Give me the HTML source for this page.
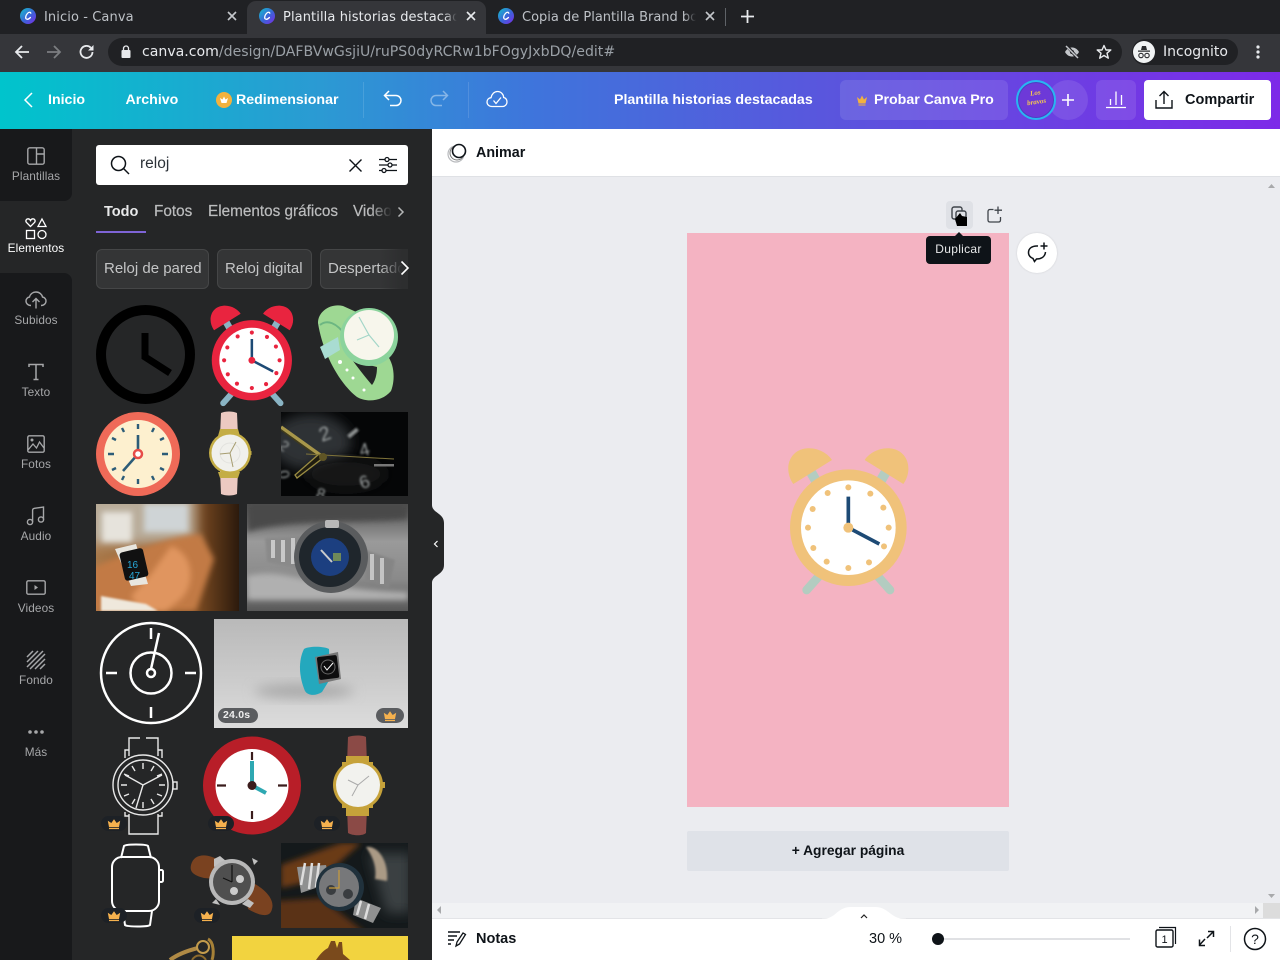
<!DOCTYPE html>
<html lang="es"><head><meta charset="utf-8"><title>Canva</title>
<style>
*{box-sizing:border-box}
html,body{margin:0;padding:0;width:1280px;height:960px;overflow:hidden;background:#ebecf0;font-family:"Liberation Sans",sans-serif}
.a{position:absolute}
.t{position:absolute;white-space:nowrap;line-height:16px}
.c{font-family:"DejaVu Sans",sans-serif;font-size:13px;letter-spacing:.1px}
.h{color:#fff;font-weight:700;font-size:14.200px;top:91.500px}
.s{left:0;width:72px;text-align:center;font-size:11.800px;color:#a6a7a9;letter-spacing:.1px}
.m{font-size:15.300px;color:#bcbdbe;-webkit-text-stroke:.2px #bcbdbe}
.k{font-size:15px;color:#c4c5c6}
svg{position:absolute;overflow:visible;display:block}
svg.p{overflow:hidden}
.crown{position:absolute;border-radius:10px;background:#1d2126;width:26px;height:15px}
</style></head><body>
<svg width="0" height="0" style="position:absolute"><defs>
<symbol id="alarm" viewBox="0 0 480 540">
<path d="M122 125L148 170M348 125L322 170" stroke="var(--l)" stroke-width="30"/>
<path d="M150 435L110 480M320 435L360 480" stroke="var(--l)" stroke-width="26" stroke-linecap="round"/>
<path d="M70 162C40 120 55 60 110 55C145 52 175 72 186 90ZM400 162C430 120 415 60 360 55C325 52 295 72 284 90Z" fill="var(--b)"/>
<circle cx="235" cy="293" r="175" fill="var(--b)"/><circle cx="235" cy="293" r="142" fill="#fff"/>
<g fill="var(--b)"><circle cx="235" cy="172" r="9"/><circle cx="301" cy="191" r="9"/><circle cx="340" cy="233" r="9"/><circle cx="356" cy="293" r="9"/><circle cx="342" cy="349" r="9"/><circle cx="297" cy="397" r="9"/><circle cx="235" cy="414" r="9"/><circle cx="170" cy="395" r="9"/><circle cx="130" cy="354" r="9"/><circle cx="114" cy="293" r="9"/><circle cx="128" cy="237" r="9"/><circle cx="173" cy="189" r="9"/></g>
<path d="M235 200V293L328 342" fill="none" stroke="#1d4a75" stroke-width="11"/>
<circle cx="235" cy="293" r="15" fill="var(--b)"/>
</symbol>
<filter id="b1" x="-30%" y="-30%" width="160%" height="160%"><feGaussianBlur stdDeviation="1"/></filter>
<filter id="b3" x="-30%" y="-30%" width="160%" height="160%"><feGaussianBlur stdDeviation="3"/></filter>
<filter id="b6" x="-50%" y="-50%" width="200%" height="200%"><feGaussianBlur stdDeviation="6"/></filter>
<symbol id="cr" viewBox="0 0 26 15"><path d="M8 11L6.800 4.800L10.300 7L13 3.200L15.700 7L19.200 4.800L18 11Z" fill="#f5b14e"/><rect x="8" y="11.800" width="10" height="1.300" fill="#f5b14e"/></symbol>
<symbol id="logo" viewBox="0 0 16 16"><defs><linearGradient id="lg" x1="0" y1="0" x2="1" y2="1"><stop offset="0" stop-color="#12c2cc"/><stop offset=".55" stop-color="#3d62d8"/><stop offset="1" stop-color="#7d2ae8"/></linearGradient></defs><circle cx="8" cy="8" r="8" fill="url(#lg)"/><path d="M10.800 5.200C10.500 3.800 8.800 3.900 7.400 5.500C5.700 7.500 5.100 10.200 6.400 11C7.500 11.700 9.200 10.800 10.400 9.500" fill="none" stroke="#fff" stroke-width="1.300" stroke-linecap="round"/></symbol>
</defs></svg>

<!-- Chrome -->
<div class="a" style="left:0;top:0;width:1280px;height:34px;background:#202124"></div>
<div class="a" style="left:0;top:34px;width:1280px;height:38px;background:#35363a"></div>
<div class="a" style="left:247px;top:1px;width:239px;height:33px;background:#35363a;border-radius:9px 9px 0 0"></div>
<svg style="left:20px;top:8px" width="16" height="16"><use href="#logo"/></svg>
<svg style="left:259px;top:8px" width="16" height="16"><use href="#logo"/></svg>
<svg style="left:498px;top:8px" width="16" height="16"><use href="#logo"/></svg>
<div class="t c" style="left:44px;top:10px;color:#bdc1c6">Inicio - Canva</div>
<div class="t c" style="left:283px;top:10px;width:177px;overflow:hidden;color:#e8eaed">Plantilla historias destacadas</div>
<div class="a" style="left:444px;top:6px;width:16px;height:20px;background:linear-gradient(90deg,rgba(53,54,58,0),#35363a 80%)"></div>
<div class="t c" style="left:522px;top:10px;width:176px;overflow:hidden;color:#bdc1c6;letter-spacing:0">Copia de Plantilla Brand book</div>
<div class="a" style="left:684px;top:6px;width:14px;height:20px;background:linear-gradient(90deg,rgba(32,33,36,0),#202124 85%)"></div>
<svg style="left:227px;top:11px" width="10" height="10"><path d="M1 1L9 9M9 1L1 9" stroke="#c4c7cb" stroke-width="1.600"/></svg>
<svg style="left:466px;top:11px" width="10" height="10"><path d="M1 1L9 9M9 1L1 9" stroke="#e8eaed" stroke-width="1.600"/></svg>
<svg style="left:705px;top:11px" width="10" height="10"><path d="M1 1L9 9M9 1L1 9" stroke="#c4c7cb" stroke-width="1.600"/></svg>
<div class="a" style="left:725px;top:8px;width:1px;height:18px;background:#5f6368"></div>
<svg style="left:741px;top:10px" width="13" height="13"><path d="M6.500 0V13M0 6.500H13" stroke="#e8eaed" stroke-width="1.800"/></svg>
<svg style="left:14px;top:44px" width="16" height="16"><path d="M15 8H2M8 2L2 8L8 14" fill="none" stroke="#e8eaed" stroke-width="1.800"/></svg>
<svg style="left:46px;top:44px" width="16" height="16"><path d="M1 8H14M8 2L14 8L8 14" fill="none" stroke="#7c7e81" stroke-width="1.800"/></svg>
<svg style="left:79px;top:44px" width="16" height="16"><path d="M13.500 8A6 6 0 1 1 11.800 3.700" fill="none" stroke="#e8eaed" stroke-width="1.800"/><path d="M14.500 1V6.500H9Z" fill="#e8eaed"/></svg>
<div class="a" style="left:108px;top:38px;width:1014px;height:28px;background:#202124;border-radius:14px"></div>
<svg style="left:121px;top:45px" width="10" height="13"><rect x="0.500" y="5" width="9" height="8" rx="1" fill="#e8eaed"/><path d="M2.500 5V3.500a2.500 2.500 0 0 1 5 0V5" fill="none" stroke="#e8eaed" stroke-width="1.300"/></svg>
<div class="t" style="left:142px;top:44px;font-family:'DejaVu Sans',sans-serif;font-size:14.100px;color:#e8eaed">canva.com<span style="color:#9aa0a6">/design/DAFBVwGsjiU/ruPS0dyRCRw1bFOgyJxbDQ/edit#</span></div>
<svg style="left:1064px;top:44px" width="16" height="16"><path d="M1 8C3 4.500 5.500 3.500 8 3.500S13 4.500 15 8C13 11.500 10.500 12.500 8 12.500S3 11.500 1 8Z" fill="#c4c7cb"/><circle cx="8" cy="8" r="2" fill="#202124"/><path d="M2.500 1.500L13.500 14" stroke="#202124" stroke-width="3"/><path d="M2 2L14 14" stroke="#c4c7cb" stroke-width="1.500"/></svg>
<svg style="left:1096px;top:44px" width="16" height="16"><path d="M8 1.500L10 6H14.800L11 9.200L12.300 14.200L8 11.500L3.700 14.200L5 9.200L1.200 6H6Z" fill="none" stroke="#e8eaed" stroke-width="1.400" stroke-linejoin="round"/></svg>
<div class="a" style="left:1132px;top:39px;width:106px;height:26px;background:#202124;border-radius:13px"></div>
<div class="a" style="left:1133px;top:41px;width:22px;height:22px;background:#f1f3f4;border-radius:50%"></div>
<svg style="left:1137px;top:45px" width="14" height="14"><path d="M4 5L5 1H9L10 5ZM1 5.500H13V6.700H1Z" fill="#2b2c2f"/><circle cx="4" cy="10.500" r="2.200" fill="none" stroke="#2b2c2f" stroke-width="1.100"/><circle cx="10" cy="10.500" r="2.200" fill="none" stroke="#2b2c2f" stroke-width="1.100"/></svg>
<div class="t" style="left:1163px;top:44px;font-family:'DejaVu Sans',sans-serif;font-size:14px;color:#e8eaed">Incognito</div>
<svg style="left:1256px;top:45px" width="4" height="14"><circle cx="2" cy="2" r="1.600" fill="#e8eaed"/><circle cx="2" cy="7" r="1.600" fill="#e8eaed"/><circle cx="2" cy="12" r="1.600" fill="#e8eaed"/></svg>

<!-- Canva header -->
<div class="a" style="left:0;top:72px;width:1280px;height:57px;background:linear-gradient(90deg,#00c4cc 0,#2b9ad3 25%,#3f74dc 42%,#5a55dd 65%,#7d2ae8 100%)"></div>
<svg style="left:23px;top:92px" width="10" height="16"><path d="M9 1L2 8L9 15" fill="none" stroke="#fff" stroke-width="1.500"/></svg>
<div class="t h" style="left:48px">Inicio</div>
<div class="t h" style="left:125.500px">Archivo</div>
<div class="a" style="left:216px;top:92px;width:16px;height:16px;border-radius:50%;background:#f3b23e"></div>
<svg style="left:219px;top:95px" width="10" height="10"><path d="M1 3L2.500 8H7.500L9 3L6.500 4.500L5 1.500L3.500 4.500Z" fill="#fff"/></svg>
<div class="t h" style="left:236px">Redimensionar</div>
<div class="a" style="left:363px;top:82px;width:1px;height:36px;background:rgba(255,255,255,.12)"></div>
<div class="a" style="left:468px;top:82px;width:1px;height:36px;background:rgba(255,255,255,.12)"></div>
<svg style="left:383px;top:90px" width="20" height="18"><path d="M6 1L1.500 5.500L6 10M2 5.500H13C16 5.500 18 8 18 10.500S16 15.500 13 15.500H7" fill="none" stroke="#fff" stroke-width="1.500"/></svg>
<svg style="left:429px;top:90px" width="20" height="18"><path d="M14 1L18.500 5.500L14 10M18 5.500H7C4 5.500 2 8 2 10.500S4 15.500 7 15.500H13" fill="none" stroke="rgba(255,255,255,.4)" stroke-width="1.500"/></svg>
<svg style="left:486px;top:90px" width="22" height="18"><path d="M6 16.500C3 16.500 1 14.500 1 12C1 9.700 2.700 8 5 7.700C5.800 4 8.300 1.500 11.500 1.500C15 1.500 17.500 4.300 17.700 7.500C19.700 8 21 9.800 21 12C21 14.500 19 16.500 16.500 16.500Z" fill="none" stroke="#fff" stroke-width="1.300"/><path d="M7.500 10.500L10 13.500L15 7.500" fill="none" stroke="#fff" stroke-width="1.300"/></svg>
<div class="t h" style="left:614px">Plantilla historias destacadas</div>
<div class="a" style="left:840px;top:80px;width:168px;height:40px;border-radius:6px;background:rgba(255,255,255,.1)"></div>
<svg style="left:856px;top:94px" width="12" height="12"><path d="M1 3L2.500 9.500H9.500L11 3L8 5.500L6 1.500L4 5.500ZM2.500 10.500H9.500V11.500H2.500Z" fill="#f3b23e"/></svg>
<div class="t h" style="left:874px">Probar Canva Pro</div>
<div class="a" style="left:1048px;top:80px;width:40px;height:40px;border-radius:50%;background:rgba(255,255,255,.1)"></div>
<div class="a" style="left:1016px;top:80px;width:40px;height:40px;border-radius:50%;border:2px solid #28b6f2;background:#6d39d8;box-shadow:inset 0 0 0 1px #4c3fc0"></div>
<div class="t" style="left:1016px;top:89px;width:40px;text-align:center;font-size:7px;line-height:9px;font-weight:700;font-style:italic;color:#f5c94f;font-family:'Liberation Serif',serif;transform:rotate(-8deg)">Los<br>bravos</div>
<svg style="left:1062px;top:94px" width="12" height="12"><path d="M6 0V12M0 6H12" stroke="#fff" stroke-width="1.600"/></svg>
<div class="a" style="left:1096px;top:80px;width:40px;height:40px;border-radius:6px;background:rgba(255,255,255,.1)"></div>
<svg style="left:1106px;top:90px" width="20" height="19"><path d="M0 17.500H20" stroke="#fff" stroke-width="1.300"/><path d="M4.500 9V15M10 1.500V15M15.500 5V15" stroke="#fff" stroke-width="1.300"/></svg>
<div class="a" style="left:1144px;top:80px;width:127px;height:40px;border-radius:4px;background:#fff"></div>
<svg style="left:1155px;top:90px" width="18" height="19"><path d="M1 10V18H17V10M9 14V1.500M4.500 6L9 1.500L13.500 6" fill="none" stroke="#0e1318" stroke-width="1.400"/></svg>
<div class="t" style="left:1185px;top:91.500px;color:#0e1318;font-weight:700;font-size:14.500px">Compartir</div>

<!-- Sidebar -->
<div class="a" style="left:0;top:129px;width:72px;height:831px;background:#18191b"></div>
<div class="a" style="left:72px;top:129px;width:360px;height:831px;background:#252627"></div>
<div class="a" style="left:0;top:191px;width:72px;height:92px;background:#252627"></div>
<div class="a" style="left:0;top:129px;width:72px;height:72px;border-radius:0 0 8px 0;background:#18191b"></div>
<div class="a" style="left:0;top:273px;width:72px;height:72px;border-radius:0 8px 0 0;background:#18191b"></div>
<svg style="left:27px;top:147px" width="18" height="18"><rect x=".8" y=".8" width="16.400" height="16.400" rx="2" fill="none" stroke="#a6a7a9" stroke-width="1.400"/><path d="M9.500 1V17M9.500 7H17" stroke="#a6a7a9" stroke-width="1.400"/></svg>
<div class="t s" style="top:168px">Plantillas</div>
<svg style="left:25px;top:218px" width="22" height="21"><path d="M5.500 8.500L1.500 4.500C0 2.500 1.500 .8 3 .8C4.200 .8 5 1.500 5.500 2.500C6 1.500 6.800 .8 8 .8C9.500 .8 11 2.500 9.500 4.500Z" fill="none" stroke="#fff" stroke-width="1.300"/><path d="M17 1L21 8.500H13Z" fill="none" stroke="#fff" stroke-width="1.300"/><rect x="1.500" y="12.500" width="8" height="8" fill="none" stroke="#fff" stroke-width="1.300"/><circle cx="17" cy="16.500" r="4" fill="none" stroke="#fff" stroke-width="1.300"/></svg>
<div class="t s" style="top:240px;color:#fff">Elementos</div>
<svg style="left:25px;top:291px" width="22" height="18"><path d="M6 14.500C3 14.500 1 12.500 1 10C1 8 2.500 6.300 4.500 6C5.200 3 7.800 1 11 1C14.500 1 17 3.500 17.500 6C19.500 6.300 21 8 21 10C21 12.500 19 14.500 16 14.500M11 17.500V8M7.500 11L11 7.500L14.500 11" fill="none" stroke="#a6a7a9" stroke-width="1.400"/></svg>
<div class="t s" style="top:312px">Subidos</div>
<svg style="left:28px;top:363px" width="16" height="18"><path d="M1 4V1.500H15V4M8 1.500V16.500M5.500 16.500H10.500" fill="none" stroke="#a6a7a9" stroke-width="1.500"/></svg>
<div class="t s" style="top:384px">Texto</div>
<svg style="left:27px;top:435px" width="18" height="18"><rect x=".8" y=".8" width="16.400" height="16.400" rx="1.500" fill="none" stroke="#a6a7a9" stroke-width="1.400"/><circle cx="5" cy="5" r="1.500" fill="#a6a7a9"/><path d="M1 15L6 9L9.500 13L12.500 7L17 13" fill="none" stroke="#a6a7a9" stroke-width="1.300"/></svg>
<div class="t s" style="top:456px">Fotos</div>
<svg style="left:26px;top:506px" width="20" height="20"><circle cx="4" cy="16" r="2.600" fill="none" stroke="#a6a7a9" stroke-width="1.400"/><circle cx="15" cy="13.500" r="2.600" fill="none" stroke="#a6a7a9" stroke-width="1.400"/><path d="M6.600 16V4C6.600 3 7.500 2.500 8.500 2.300L17.500 1V13.500" fill="none" stroke="#a6a7a9" stroke-width="1.400"/></svg>
<div class="t s" style="top:528px">Audio</div>
<svg style="left:26px;top:580px" width="20" height="15"><rect x=".8" y=".8" width="18.400" height="13.400" rx="1.500" fill="none" stroke="#a6a7a9" stroke-width="1.400"/><path d="M8.500 5L12 7.500L8.500 10Z" fill="#a6a7a9"/></svg>
<div class="t s" style="top:600px">Videos</div>
<svg style="left:26px;top:650px" width="20" height="20"><path d="M1 7L7 1M1 12L12 1M1 17L17 1M4 19L19 4M9 19L19 9M14 19L19 14" stroke="#a6a7a9" stroke-width="1.500"/></svg>
<div class="t s" style="top:672px">Fondo</div>
<svg style="left:27px;top:729px" width="18" height="6"><circle cx="3" cy="3" r="1.800" fill="#a6a7a9"/><circle cx="9" cy="3" r="1.800" fill="#a6a7a9"/><circle cx="15" cy="3" r="1.800" fill="#a6a7a9"/></svg>
<div class="t s" style="top:744px">Más</div>

<!-- Search -->
<div class="a" style="left:96px;top:145px;width:312px;height:40px;background:#fff;border-radius:3px"></div>
<svg style="left:110px;top:155px" width="20" height="20"><circle cx="8.500" cy="8.500" r="7" fill="none" stroke="#0e1318" stroke-width="1.500"/><path d="M13.500 13.500L19 19" stroke="#0e1318" stroke-width="1.500"/></svg>
<div class="t" style="left:140px;top:155.500px;font-size:15.500px;color:#2c3238">reloj</div>
<svg style="left:349px;top:159px" width="13" height="13"><path d="M.5 .5L12.500 12.500M12.500 .5L.5 12.500" stroke="#0e1318" stroke-width="1.400"/></svg>
<svg style="left:378px;top:156px" width="20" height="18"><path d="M1 3.500H7M11 3.500H19M1 9H10M14 9H19M1 14.500H4M8 14.500H19" stroke="#0e1318" stroke-width="1.300"/><circle cx="9" cy="3.500" r="2" fill="none" stroke="#0e1318" stroke-width="1.300"/><circle cx="12" cy="9" r="2" fill="none" stroke="#0e1318" stroke-width="1.300"/><circle cx="6" cy="14.500" r="2" fill="none" stroke="#0e1318" stroke-width="1.300"/></svg>

<div class="t" style="left:104px;top:204px;font-size:14.500px;font-weight:700;color:#e8e9ea">Todo</div>
<div class="t m" style="left:154px;top:204px">Fotos</div>
<div class="t m" style="left:208px;top:204px">Elementos gráficos</div>
<div class="t m" style="left:353px;top:204px;width:38px;overflow:hidden">Videos</div>
<div class="a" style="left:370px;top:200px;width:22px;height:24px;background:linear-gradient(90deg,rgba(37,38,39,0),#252627)"></div>
<svg style="left:397px;top:206px" width="8" height="12"><path d="M1.500 1.500L6 6L1.500 10.500" fill="none" stroke="#b5b6b7" stroke-width="1.500"/></svg>
<div class="a" style="left:96px;top:231px;width:50px;height:2px;background:#7e64d6"></div>

<div class="a" style="left:96px;top:249px;width:113px;height:40px;background:#343536;border:1px solid #454647;border-radius:6px"></div>
<div class="t k" style="left:104px;top:261px">Reloj de pared</div>
<div class="a" style="left:217px;top:249px;width:95px;height:40px;background:#343536;border:1px solid #454647;border-radius:6px"></div>
<div class="t k" style="left:225px;top:261px">Reloj digital</div>
<div class="a" style="left:320px;top:249px;width:88px;height:40px;background:#343536;border:1px solid #454647;border-right:0;border-radius:6px 0 0 6px;overflow:hidden"></div>
<div class="t k" style="left:328px;top:261px;width:78px;overflow:hidden">Despertador</div>
<div class="a" style="left:380px;top:249px;width:28px;height:40px;background:linear-gradient(90deg,rgba(52,53,54,0),#2d2e2f 80%)"></div>
<svg style="left:400px;top:260px" width="10" height="16"><path d="M1.500 1.500L8 8L1.500 14.500" fill="none" stroke="#fff" stroke-width="1.600"/></svg>

<!-- Row 1 -->
<svg style="left:96px;top:305px" width="100" height="100"><circle cx="49.500" cy="49.500" r="44.500" fill="none" stroke="#000" stroke-width="10"/><path d="M49 28V52L74 68" fill="none" stroke="#000" stroke-width="7"/></svg>
<svg style="left:198px;top:293px;--b:#e9243f;--l:#8ab4c4" width="110" height="124"><use href="#alarm" width="110" height="124"/></svg>
<svg style="left:317px;top:305px" width="82" height="98"><path d="M1 18C1 6 14 -2 26 1L46 10L70 50C78 60 78 76 74 86C66 96 50 98 40 92C24 80 6 50 1 18Z" fill="#9ed893"/><path d="M36 56L52 60L60 62C60 70 58 76 55 80C48 72 42 64 36 56Z" fill="#252627"/><path d="M3 20C10 14 20 18 28 30" fill="none" stroke="#6cb682" stroke-width="2"/><path d="M3 42L21 32L23 45L8 54Z" fill="#a9dcd2"/><circle cx="52" cy="32" r="29" fill="#8bd39c"/><circle cx="52" cy="30" r="25" fill="#f7f6ec"/><path d="M52 30L42 12M52 30L62 42M52 30L40 35" stroke="#a3d6c8" stroke-width="1.200"/><g fill="#fff"><circle cx="23" cy="57" r="2"/><circle cx="30" cy="65" r="1.500"/><circle cx="36" cy="73" r="1.500"/><circle cx="47" cy="85" r="1.500"/></g></svg>

<!-- Row 2 -->
<svg style="left:96px;top:412px" width="85" height="84"><circle cx="42" cy="42" r="42" fill="#ef6a58"/><circle cx="42" cy="42" r="34" fill="#fdf0cf"/><path d="M42 12V17M42 67V72M72 42H66M12 42H18M58 16L56 20M26 68L28 64M68 26L64 28M16 58L20 56M68 58L64 56M16 26L20 28M58 68L56 64M26 16L28 20" stroke="#2c5c78" stroke-width="2.400"/><path d="M42 23V40M42 42L27 59" stroke="#2c5c78" stroke-width="2.600" fill="none"/><circle cx="42" cy="42" r="4" fill="#fff" stroke="#e74c48" stroke-width="2.500"/></svg>
<svg style="left:207px;top:412px" width="44" height="84"><path d="M14 1C18 -1 26 -1 30 1L31 24H13ZM13 58H31L30 82C26 84 18 84 14 82Z" fill="#ecc9c1"/><path d="M13 17H31L33 24H11ZM11 60H33L31 66H13Z" fill="#c4ad45"/><circle cx="23" cy="41" r="21" fill="#c4ad45"/><circle cx="23" cy="41" r="18.500" fill="#f0f0ec"/><circle cx="23" cy="41" r="10" fill="none" stroke="#e2e2de"/><path d="M23 41L29 30M23 41L13 42M23 41L26 55" stroke="#a69d70" stroke-width="1"/><rect x="43" y="39" width="1.500" height="4" fill="#c4ad45"/></svg>
<svg class="p" style="left:281px;top:412px" width="127" height="84"><rect width="127" height="84" fill="#050607"/><ellipse cx="30" cy="30" rx="40" ry="28" fill="#2e3334" filter="url(#b6)"/><ellipse cx="65" cy="62" rx="40" ry="16" fill="#141718" filter="url(#b6)"/><path d="M0 15L42 45" stroke="#a8974a" stroke-width="3.500"/><path d="M0 18L40 47" stroke="#3f3a1c" stroke-width="1.500"/><path d="M42 46L16 66L14 63L38 42Z" fill="#1f1c10" stroke="#9b8d42" stroke-width="1.300"/><path d="M25 42L113 47" stroke="#80743a" stroke-width="1"/><circle cx="42" cy="45" r="4" fill="#5f5525"/><g font-family="Liberation Sans,sans-serif" fill="#9a9f9f" filter="url(#b1)"><text x="38" y="28" font-size="20" transform="rotate(-20 45 21)">2</text><text x="78" y="43" font-size="18" transform="rotate(-15 86 36)">4</text><text x="78" y="75" font-size="18" transform="rotate(-20 86 68)">6</text><text x="36" y="88" font-size="16" transform="rotate(15 42 80)">8</text><text x="0" y="70" font-size="15" transform="rotate(80 5 63)">0</text><text x="0" y="40" font-size="15" transform="rotate(40 5 33)">2</text></g><rect x="66" y="19" width="12" height="4" transform="rotate(-40 72 21)" fill="#8c9090" filter="url(#b1)"/><rect x="93" y="52" width="20" height="2.500" fill="#777"/></svg>

<!-- Row 3 -->
<svg class="p" style="left:96px;top:504px" width="143" height="107"><defs><linearGradient id="g3" x1="0" y1="0" x2="1" y2="0"><stop offset="0" stop-color="#a9794a"/><stop offset=".65" stop-color="#8a5426"/><stop offset="1" stop-color="#2c1a0c"/></linearGradient></defs><rect width="143" height="107" fill="url(#g3)"/><rect x="-10" y="-10" width="110" height="50" fill="#b9ad9b" filter="url(#b6)"/><rect x="48" y="0" width="44" height="28" fill="#cfd4d6" filter="url(#b3)"/><rect x="6" y="8" width="30" height="30" fill="#e6e3dc" filter="url(#b3)"/><path d="M-5 64C30 50 70 32 105 30L118 55L100 107H-5Z" fill="#c27a45" filter="url(#b3)"/><path d="M75 42C98 50 100 80 85 95L70 107H45L35 92L55 70Z" fill="#e0955e" filter="url(#b3)"/><path d="M5 92L50 100L62 107H5Z" fill="#efe8dc" filter="url(#b1)"/><path d="M19 45L40 40L52 80L35 82Z" fill="#e8e6df"/><rect x="0" y="0" width="24" height="29" rx="3" transform="translate(23 49) rotate(-13)" fill="#111"/><text x="31" y="64" font-size="10" fill="#27a8d8" font-family="Liberation Sans,sans-serif">16</text><text x="33" y="75" font-size="10" fill="#27a8d8" font-family="Liberation Sans,sans-serif">47</text></svg>
<svg class="p" style="left:247px;top:504px" width="161" height="107"><defs><linearGradient id="g1" x1="0" y1="0" x2="0" y2="1"><stop offset="0" stop-color="#4f4f4f"/><stop offset=".35" stop-color="#9a9a9a"/><stop offset=".7" stop-color="#8a8a8a"/><stop offset="1" stop-color="#585858"/></linearGradient></defs><rect width="161" height="107" fill="url(#g1)"/><path d="M0 28C50 14 110 20 161 15V0H0Z" fill="#4a4a4a" filter="url(#b3)"/><path d="M0 72C40 62 60 85 161 88V96H0Z" fill="#b0b0b0" filter="url(#b3)"/><path d="M18 34L56 32L56 66L20 58Z" fill="#8a8a8a" filter="url(#b1)"/><path d="M26 36V54M36 36V58M46 34V60" stroke="#c8c8c8" stroke-width="4"/><path d="M118 46L148 56L142 84L118 76Z" fill="#858585" filter="url(#b1)"/><path d="M125 50V76M135 54V80" stroke="#c4c4c4" stroke-width="4"/><ellipse cx="84" cy="53" rx="37" ry="36" fill="#5a5c5e"/><ellipse cx="83" cy="53" rx="31" ry="30" fill="#1f262c"/><circle cx="83" cy="53" r="19" fill="#1c3f80"/><rect x="86" y="49" width="8" height="8" fill="#6f8a5a"/><path d="M74 46L85 58" stroke="#ccc" stroke-width="2"/><rect x="78" y="16" width="14" height="8" rx="2" fill="#b8b8b8"/></svg>

<!-- Row 4 -->
<svg style="left:100px;top:622px" width="102" height="102"><g fill="none" stroke="#fff" stroke-width="2.500"><circle cx="51" cy="51" r="50"/><circle cx="51" cy="51" r="20.500"/><circle cx="51" cy="51" r="4"/><path d="M51 6V17M51 85V96M6 51H17M85 51H96M51 47L59 11"/></g></svg>
<svg class="p" style="left:214px;top:619px" width="194" height="109"><defs><linearGradient id="g2" x1="0" y1="0" x2="0" y2="1"><stop offset="0" stop-color="#b9b9b9"/><stop offset=".6" stop-color="#cdcdcd"/><stop offset="1" stop-color="#dcdcdc"/></linearGradient></defs><rect width="194" height="109" fill="url(#g2)"/><ellipse cx="90" cy="72" rx="50" ry="7" fill="#a8a8a8" filter="url(#b6)"/><path d="M90 30C94 27 110 27 115 30L116 60L108 73C102 77 94 77 91 72C85 58 84 42 90 30Z" fill="#24a8bd"/><path d="M101 38L124 33L127 60L105 65Z" fill="#777"/><rect x="104" y="37" width="20" height="23" rx="2" transform="rotate(-7 114 48)" fill="#0d0d0e"/><circle cx="114" cy="48" r="7" fill="none" stroke="#666"/><path d="M110 47L113 51L119 44" fill="none" stroke="#fff" stroke-width="1"/></svg>
<div class="a" style="left:218px;top:708px;width:40px;height:15px;border-radius:8px;background:#5a5c5f"></div>
<div class="t" style="left:223px;top:708px;font-size:10.500px;line-height:15px;font-weight:700;color:#eee;letter-spacing:.2px">24.0s</div>
<div class="a" style="left:376px;top:708px;width:28px;height:15px;border-radius:8px;background:#5a5c5f"></div>
<svg style="left:377px;top:708px" width="26" height="15"><use href="#cr"/></svg>

<!-- Row 5 -->
<svg style="left:110px;top:736px" width="70" height="100"><g fill="none" stroke="#e8e8e8" stroke-width="1.400"><path d="M19 20V2H30M36 2H48V20M19 78V98H48V78"/><path d="M19 14H15V22M48 14H52V22M19 80H15V76M48 80H52V76"/><circle cx="33" cy="49" r="30"/><circle cx="33" cy="49" r="25"/><path d="M33 49L15 39M33 49L52 39M33 49L26 72M33 27V33M33 66V72M11 49H17M49 49H55M22 30L25 35M44 30L41 35M22 68L25 63M44 68L41 63M14 38L19 40M14 60L19 58M52 38L47 40M52 60L47 58"/><rect x="63" y="46" width="4" height="7"/></g></svg>
<svg style="left:203px;top:736px" width="98" height="99"><circle cx="49" cy="49.500" r="49" fill="#b81e28"/><circle cx="49" cy="49.500" r="36.500" fill="#fff"/><path d="M49 16V24M49 75V83M14 49.500H23M75 49.500H84" stroke="#3a1c1c" stroke-width="2.200"/><path d="M49 25V49.500L63 57" fill="none" stroke="#2ea8b2" stroke-width="4"/><circle cx="49" cy="49.500" r="4.500" fill="#3a1c1c"/></svg>
<svg style="left:333px;top:736px" width="52" height="99"><path d="M15 1C20 -1 30 -1 33 1L34 28H14ZM14 72H34L33 97C30 100 20 100 15 97Z" fill="#8b4a46"/><path d="M9 26H13V20H36V26H40V72H36V80H13V72H9Z" fill="#c6a23a"/><circle cx="25" cy="49" r="25" fill="#c6a23a"/><circle cx="25" cy="49" r="22" fill="#f2f2ee"/><path d="M25 49L36 40M25 49L19 60M25 49L15 44" stroke="#aaa" stroke-width="1"/><rect x="49" y="46" width="3" height="6" fill="#c6a23a"/></svg>

<!-- Row 6 -->
<svg style="left:110px;top:843px" width="56" height="86"><g fill="none" stroke="#fff" stroke-width="2"><path d="M11 15L14 3C16 1 36 1 38 3L41 15M13 68L15 82C17 84 38 84 40 82L42 68"/><rect x="2" y="14" width="47" height="54" rx="10"/><rect x="49" y="27" width="4" height="12" rx="1.500"/></g></svg>
<svg style="left:190px;top:853px" width="84" height="66"><path d="M1 12C4 0 18 0 30 8L26 26L14 25C6 23 -1 20 1 12ZM56 40L65 31C74 36 85 46 82 56C80 66 68 62 58 56Z" fill="#7a4220"/><path d="M24 6L30 3L36 8L24 14ZM58 46L64 50L60 55L52 51ZM62 5L68 8L64 12ZM22 50L26 46L30 52Z" fill="#c0c0c0"/><circle cx="42" cy="29" r="23" fill="#b8b8b8"/><circle cx="42" cy="29" r="19" fill="#4f4f4f"/><circle cx="50" cy="26" r="4" fill="#ccc"/><circle cx="44" cy="38" r="4" fill="#ccc"/><path d="M42 29V12M42 29L33 25" stroke="#111" stroke-width="1.200"/></svg>
<svg class="p" style="left:281px;top:843px" width="127" height="85"><rect width="127" height="85" fill="#14191b"/><path d="M0 22L60 0H80L40 36L0 45Z" fill="#6a3a16" filter="url(#b3)"/><path d="M-5 58L40 55L85 90H-5Z" fill="#5a3212" filter="url(#b3)"/><path d="M88 10H130V70L105 70Z" fill="#3a4042" filter="url(#b6)"/><path d="M85 4C98 2 108 20 106 38L94 36C96 24 92 14 85 4Z" fill="#aa9a85" filter="url(#b1)"/><path d="M16 24L45 22L49 40L20 50Z" fill="#8f9090"/><path d="M24 20L20 42M31 20L28 46M38 20L35 44" stroke="#ddd" stroke-width="2.500"/><path d="M75 55L100 65L92 80L72 72Z" fill="#8f9090"/><path d="M80 58L76 72M88 61L84 76" stroke="#ddd" stroke-width="2.500"/><circle cx="59" cy="44" r="24" fill="#20313c"/><circle cx="58" cy="44" r="20" fill="#77787a"/><circle cx="50" cy="47" r="5" fill="#3a3d40"/><circle cx="67" cy="51" r="5" fill="#3a3d40"/><path d="M58 27V45L48 45" fill="none" stroke="#c89b3a" stroke-width="1.200"/></svg>

<!-- crowns on row 5/6 -->
<div class="crown" style="left:101px;top:816px"></div><svg style="left:101px;top:816px" width="26" height="15"><use href="#cr"/></svg>
<div class="crown" style="left:208px;top:816px"></div><svg style="left:208px;top:816px" width="26" height="15"><use href="#cr"/></svg>
<div class="crown" style="left:314px;top:816px"></div><svg style="left:314px;top:816px" width="26" height="15"><use href="#cr"/></svg>
<div class="crown" style="left:101px;top:908px"></div><svg style="left:101px;top:908px" width="26" height="15"><use href="#cr"/></svg>
<div class="crown" style="left:194px;top:908px"></div><svg style="left:194px;top:908px" width="26" height="15"><use href="#cr"/></svg>

<!-- Row 7 -->
<svg style="left:170px;top:936px" width="46" height="24"><path d="M0 24C8 18 20 14 28 12" fill="none" stroke="#b08a45" stroke-width="4"/><circle cx="33" cy="11" r="6" fill="none" stroke="#c39b4c" stroke-width="2"/><path d="M38 3C44 6 44 18 42 24" fill="none" stroke="#a78137" stroke-width="3"/><path d="M22 24C26 18 32 18 36 24" fill="none" stroke="#8c6a2d" stroke-width="2"/></svg>
<div class="a" style="left:232px;top:936px;width:176px;height:24px;background:#f2d33f;overflow:hidden"><svg style="left:80px;top:4px" width="50" height="20"><path d="M4 20C8 14 12 10 16 8L19 1H23L25 8L27 2H30L31 14L38 20Z" fill="#7a4a1c"/></svg></div>

<!-- Collapse handle -->
<svg style="left:432px;top:505px" width="12" height="78"><path d="M0 0C0 8 12 8 12 18V60C12 70 0 70 0 78Z" fill="#252627"/><path d="M5.500 36L2.500 39L5.500 42" fill="none" stroke="#fff" stroke-width="1.200"/></svg>

<!-- Top bar of canvas -->
<div class="a" style="left:432px;top:129px;width:848px;height:48px;background:#fff;border-bottom:1px solid #dfe1e5"></div>
<svg style="left:446px;top:142px" width="22" height="21"><circle cx="10" cy="12" r="8" fill="none" stroke="#b8babd" stroke-width="1.200"/><circle cx="11" cy="11" r="7" fill="#fff" stroke="#777" stroke-width="1"/><circle cx="13" cy="9" r="6.500" fill="#fff" stroke="#0e1318" stroke-width="1.600"/></svg>
<div class="t" style="left:476px;top:144.500px;font-size:14.300px;font-weight:700;color:#0e1318">Animar</div>

<!-- Scrollbars -->
<div class="a" style="left:1263px;top:177px;width:17px;height:726px;background:#ebecf0"></div>
<svg style="left:1268px;top:184px" width="7" height="5"><path d="M3.500 0L7 4H0Z" fill="#a8a9ab"/></svg>
<svg style="left:1268px;top:894px" width="7" height="5"><path d="M3.500 4L7 0H0Z" fill="#a8a9ab"/></svg>
<div class="a" style="left:432px;top:903px;width:848px;height:15px;background:#f1f2f4"></div>
<div class="a" style="left:1263px;top:903px;width:17px;height:15px;background:#dcdcdc"></div>
<svg style="left:437px;top:906px" width="5" height="8"><path d="M0 4L4 0V8Z" fill="#a8a9ab"/></svg>
<svg style="left:1255px;top:906px" width="5" height="8"><path d="M4 4L0 0V8Z" fill="#a8a9ab"/></svg>

<!-- Page -->
<div class="a" style="left:946px;top:201px;width:27px;height:28px;border-radius:4px;background:#dfe1e6"></div>
<svg style="left:951px;top:206px" width="20" height="22"><rect x="1" y="1" width="10" height="12" rx="2" fill="none" stroke="#3f444a" stroke-width="1.400"/><rect x="5" y="5" width="10" height="11" rx="2" fill="#dfe1e6" stroke="#3f444a" stroke-width="1.400"/><path d="M4 13L9 7L11 10L16 11V20H6Z" fill="#000"/></svg>
<svg style="left:987px;top:206px" width="16" height="17"><path d="M6.500 3.500H3C1.700 3.500 1 4.300 1 5.500V14C1 15.200 1.700 16 3 16H11.500C12.700 16 13.500 15.200 13.500 14V11M11 .5V8M7.500 4.200H15" fill="none" stroke="#3f444a" stroke-width="1.300"/></svg>
<div class="a" style="left:687px;top:233px;width:322px;height:574px;background:#f4b3c2"></div>
<svg style="left:928px;top:228px" width="62" height="10"><path d="M27 8L31 4L35 8Z" fill="#0e1318"/></svg>
<div class="a" style="left:926px;top:236px;width:65px;height:28px;border-radius:4px;background:#0e1318"></div>
<div class="t" style="left:926px;top:241px;width:65px;text-align:center;color:#e8e9ea;font-size:12px;letter-spacing:.3px">Duplicar</div>
<div class="a" style="left:1017px;top:233px;width:40px;height:40px;border-radius:50%;background:#fff;box-shadow:0 0 2px rgba(0,0,0,.12)"></div>
<svg style="left:1027px;top:242px" width="22" height="22"><path d="M11 4C5 3.500 1.500 6.500 1.500 10.500C1.500 13.500 3.500 15.500 6 16.500L7.500 19.500L9.500 17C14 17 18 15 18.500 10" fill="none" stroke="#0e1318" stroke-width="1.500"/><path d="M17 .5V7.500M13.500 4H20.500" stroke="#0e1318" stroke-width="1.500"/></svg>
<svg style="left:770px;top:430px;--b:#f0c27a;--l:#b3ccc0" width="160" height="180"><use href="#alarm" width="160" height="180"/></svg>
<div class="a" style="left:687px;top:831px;width:322px;height:40px;background:#dfe2e8;border-radius:2px"></div>
<div class="t" style="left:687px;top:843px;width:322px;text-align:center;font-size:13.800px;font-weight:700;color:#0e1318">+ Agregar página</div>

<!-- Footer -->
<div class="a" style="left:432px;top:918px;width:848px;height:42px;background:#fff;border-top:1px solid #e3e4e7"></div>
<svg style="left:822px;top:906px" width="84" height="14"><path d="M0 13C14 13 14 2 28 1H54C68 2 68 13 84 13Z" fill="#fff"/><path d="M0 13.500H84" stroke="#fff" stroke-width="1.500"/></svg>
<svg style="left:860px;top:914px" width="8" height="5"><path d="M1 4L4 1L7 4" fill="none" stroke="#222" stroke-width="1.200"/></svg>
<svg style="left:447px;top:930px" width="20" height="18"><path d="M1 2H13M1 6H10M1 10H7M1 14H4" stroke="#0e1318" stroke-width="1.400"/><path d="M9 16L10 12L16 3L18.500 4.500L12.500 14Z" fill="none" stroke="#0e1318" stroke-width="1.300"/></svg>
<div class="t" style="left:476px;top:931px;font-size:14.500px;font-weight:700;color:#0e1318">Notas</div>
<div class="t" style="left:869px;top:931px;font-size:14.500px;color:#0e1318">30 %</div>
<div class="a" style="left:944px;top:938px;width:186px;height:2px;background:#e0e1e4"></div>
<div class="a" style="left:932px;top:933px;width:12px;height:12px;border-radius:50%;background:#0e1318"></div>
<svg style="left:1155px;top:926px" width="22" height="22"><path d="M4 1.500H20.500V18" fill="none" stroke="#0e1318" stroke-width="1.200"/><rect x="1" y="4" width="17" height="17" rx="1.500" fill="#fff" stroke="#0e1318" stroke-width="1.400"/><text x="9.500" y="17" font-size="11" text-anchor="middle" font-family="Liberation Sans,sans-serif" fill="#0e1318">1</text></svg>
<svg style="left:1198px;top:930px" width="16" height="17"><path d="M9 8L15 2M10 1.500H15.500V7M7 9L1.500 15M1.500 9.500V15.500H7" fill="none" stroke="#0e1318" stroke-width="1.500"/></svg>
<div class="a" style="left:1230px;top:926px;width:1px;height:26px;background:#e3e4e7"></div>
<svg style="left:1243px;top:927px" width="24" height="24"><circle cx="12" cy="12" r="10.500" fill="none" stroke="#0e1318" stroke-width="1.500"/><text x="12" y="17" font-size="14" text-anchor="middle" font-family="Liberation Sans,sans-serif" fill="#0e1318">?</text></svg>
</body></html>
